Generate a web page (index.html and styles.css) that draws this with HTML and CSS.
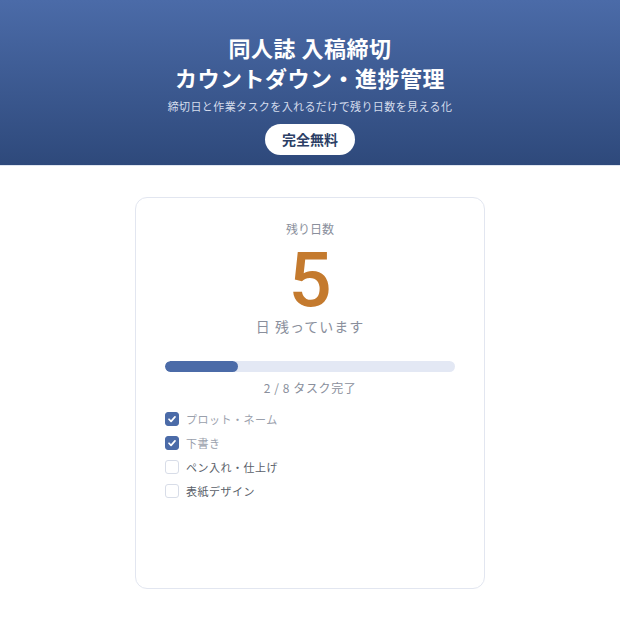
FILE: index.html
```html
<!DOCTYPE html>
<html lang="ja">
<head>
  <meta charset="UTF-8">
  <title>同人誌 入稿締切カウントダウン</title>
  <link rel="stylesheet" href="styles.css">
</head>
<body>
  <!-- Header -->
  <header class="hero">
    <h1>同人誌 入稿締切<br>カウントダウン・進捗管理</h1>
    <p class="lead">締切日と作業タスクを入れるだけで残り日数を見える化</p>
    <span class="badge">完全無料</span>
  </header>

  <!-- Countdown card -->
  <main class="wrap">
    <section class="card">
      <p class="label">残り日数</p>
      <p class="days">5</p>
      <p class="days-unit">日 残っています</p>

      <div class="bar"><div class="bar-fill" style="width: 25%"></div></div>
      <p class="progress-text">2 / 8 タスク完了</p>

      <ul class="tasks">
        <li class="done"><span class="box"><svg viewBox="0 0 14 14"><path d="M3.5 7.3l2.4 2.5 4.6-5.3" /></svg></span>プロット・ネーム</li>
        <li class="done"><span class="box"><svg viewBox="0 0 14 14"><path d="M3.5 7.3l2.4 2.5 4.6-5.3" /></svg></span>下書き</li>
        <li><span class="box"></span>ペン入れ・仕上げ</li>
        <li><span class="box"></span>表紙デザイン</li>
      </ul>
    </section>
  </main>
</body>
</html>
```

FILE: styles.css
```css
body {
  margin: 0;
  background: #fff;
  font-family: "Noto Sans CJK JP", "Noto Sans", sans-serif;
  color: #333;
}
.hero {
  height: 165px;
  box-sizing: border-box;
  padding-top: 32px;
  text-align: center;
  color: #fff;
  background: linear-gradient(180deg, #4b6ba8 0%, #2e497b 100%);
  box-shadow: 0 1px 0 #dfe5f0;
}
.hero h1 {
  margin: 0;
  font-size: 22px;
  line-height: 30px;
  font-weight: 700;
  letter-spacing: 0.5px;
}
.lead {
  margin: 6px 0 0;
  font-size: 11px;
  line-height: 16px;
  color: #d4dcec;
  letter-spacing: 0.4px;
}
.badge {
  display: inline-block;
  margin-top: 10px;
  padding: 0 17px;
  height: 31px;
  line-height: 31px;
  border-radius: 16px;
  background: #fff;
  color: #2c3f66;
  font-size: 14px;
  font-weight: 700;
}
.wrap {
  display: flex;
  justify-content: center;
  padding: 32px 0;
}
.card {
  width: 350px;
  height: 392px;
  box-sizing: border-box;
  border: 1px solid #e2e6f0;
  border-radius: 12px;
  padding: 20px 29px 0;
  text-align: center;
}
.card p {
  margin: 0;
}
.label {
  font-size: 12px;
  line-height: 22px;
  color: #8a8f9c;
}
.days {
  margin-top: 4px !important;
  font-family: Roboto, "Liberation Sans", sans-serif;
  font-weight: 500;
  font-size: 76px;
  line-height: 72px;
  color: #c47a2e;
}
.days-unit {
  margin-top: 0 !important;
  font-size: 14px;
  line-height: 20px;
  color: #8a8f9c;
  letter-spacing: 1px;
}
.bar {
  margin-top: 25px;
  height: 11px;
  border-radius: 6px;
  background: #e3e8f4;
  overflow: hidden;
}
.bar-fill {
  height: 100%;
  border-radius: 6px;
  background: #4b6ba8;
}
.progress-text {
  margin-top: 7px !important;
  font-size: 12px;
  line-height: 18px;
  color: #8a8f9c;
  letter-spacing: 0.6px;
}
.tasks {
  list-style: none;
  margin: 10px 0 0;
  padding: 0;
  text-align: left;
}
.tasks li {
  display: flex;
  align-items: center;
  gap: 7px;
  height: 24px;
  font-size: 11px;
  color: #5a5f6a;
  letter-spacing: 0.5px;
}
.tasks li.done {
  color: #9aa0ac;
}
.box {
  width: 14px;
  height: 14px;
  box-sizing: border-box;
  border: 1px solid #d8dde8;
  border-radius: 3px;
  background: #fff;
  flex: none;
}
.done .box {
  border-color: #4b6ba8;
  background: #4b6ba8;
}
.box svg {
  display: block;
  width: 12px;
  height: 12px;
}
.box path {
  fill: none;
  stroke: #fff;
  stroke-width: 2;
  stroke-linecap: round;
  stroke-linejoin: round;
}
```
